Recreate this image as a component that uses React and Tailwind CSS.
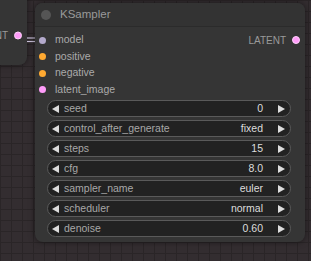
import React from "react";

const inputs = [
  { name: "model", color: "bg-[#b4aacc]" },
  { name: "positive", color: "bg-[#ffa931]" },
  { name: "negative", color: "bg-[#ffa931]" },
  { name: "latent_image", color: "bg-[#ff9cf9]" },
];

const widgets = [
  { name: "seed", value: "0" },
  { name: "control_after_generate", value: "fixed" },
  { name: "steps", value: "15" },
  { name: "cfg", value: "8.0" },
  { name: "sampler_name", value: "euler" },
  { name: "scheduler", value: "normal" },
  { name: "denoise", value: "0.60" },
];

function Arrow({ dir }) {
  return (
    <svg width="7" height="8" viewBox="0 0 7 8" className="shrink-0">
      {dir === "left" ? (
        <polygon points="7,0 7,8 0,4" fill="#dddddd" />
      ) : (
        <polygon points="0,0 0,8 7,4" fill="#dddddd" />
      )}
    </svg>
  );
}

function Widget({ name, value }) {
  return (
    <div className="h-[17px] rounded-full bg-[#222222] border border-[#5a5a5a] flex items-center pl-[4px] pr-[5px] text-[10.5px] leading-none">
      <Arrow dir="left" />
      <span className="ml-[5px] text-[#a8a8a8]">{name}</span>
      <span className="ml-auto text-[#dddddd]">{value}</span>
      <span className="ml-[15px]">
        <Arrow dir="right" />
      </span>
    </div>
  );
}

function KSampler() {
  return (
    <div className="absolute left-[35px] top-[3px] w-[270px] h-[239px] rounded-[8px] bg-[#353535] shadow-[0_0_6px_rgba(0,0,0,0.5)] flex flex-col">
      <div className="h-[24px] flex items-center px-[6px] border-b border-[#2b2b2b] rounded-t-[8px] bg-[#333333]">
        <span className="w-[10px] h-[10px] rounded-full bg-[#555555]" />
        <span className="ml-[9px] text-[11.5px] text-[#9a9a9a]">KSampler</span>
      </div>
      <div className="pt-[5px] relative">
        {inputs.map((inp, i) => (
          <div key={inp.name} className="h-[16.5px] flex items-center pl-[4px] text-[10.5px] text-[#aaaaaa]">
            <span className={`w-[7px] h-[7px] rounded-full ${inp.color}`} />
            <span className="ml-[9px]">{inp.name}</span>
            {i === 0 && (
              <span className="ml-auto flex items-center pr-[5px] text-[#9a9a9a] text-[10px]">
                LATENT
                <span className="ml-[6px] w-[8px] h-[8px] rounded-full bg-[#ff9cf9] border border-[#ffd0fb]" />
              </span>
            )}
          </div>
        ))}
      </div>
      <div className="mt-[2px] ml-[12px] mr-[14px] flex flex-col gap-[3px]">
        {widgets.map((w) => (
          <Widget key={w.name} name={w.name} value={w.value} />
        ))}
      </div>
    </div>
  );
}

export default function App() {
  return (
    <div
      className="relative w-[311px] h-[261px] overflow-hidden bg-[#332d30] bg-[linear-gradient(#2a2527_1px,transparent_1px),linear-gradient(90deg,#2a2527_1px,transparent_1px)] bg-[size:11px_11px]"
      style={{ fontFamily: '"Liberation Sans", Arial, sans-serif' }}
    >
      {/* upstream node, mostly off screen */}
      <div className="absolute left-[-60px] top-[-20px] w-[87px] h-[85px] rounded-[8px] bg-[#353535] shadow-[0_0_6px_rgba(0,0,0,0.5)]">
        <div className="absolute right-[5px] top-[55px] flex items-center text-[10px] text-[#9a9a9a] -translate-y-1/2">
          LATENT
          <span className="ml-[6px] w-[8px] h-[8px] rounded-full bg-[#ff9cf9] border border-[#ffd0fb]" />
        </div>
      </div>
      {/* link */}
      <svg className="absolute left-[27px] top-[36px]" width="9" height="8">
        <line x1="0" y1="2" x2="9" y2="2" stroke="#c8c0d8" strokeWidth="1.2" />
        <line x1="0" y1="5.5" x2="9" y2="5.5" stroke="#c8c0d8" strokeWidth="1.2" />
      </svg>
      <KSampler />
    </div>
  );
}
